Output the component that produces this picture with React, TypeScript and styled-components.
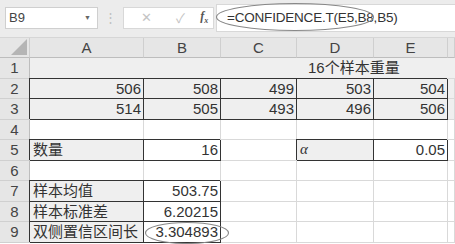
import styled, { createGlobalStyle } from 'styled-components'

const GlobalStyle = createGlobalStyle`
  html, body { margin: 0; padding: 0; background: #ffffff; }
  body { font-family: "Liberation Sans", "Noto Sans CJK SC", sans-serif; color: #333; overflow: hidden; }
`

const COLS = ['A', 'B', 'C', 'D', 'E', '']

type CellDef = { text?: string; align?: 'left' | 'right'; fill?: boolean; boxed?: boolean; italic?: boolean }

const blank: CellDef = {}
const g: CellDef = { fill: true }

// row 1 is a merged title row, drawn separately
const ROWS: CellDef[][] = [
  [
    { text: '506', align: 'right', fill: true, boxed: true },
    { text: '508', align: 'right', fill: true, boxed: true },
    { text: '499', align: 'right', fill: true, boxed: true },
    { text: '503', align: 'right', fill: true, boxed: true },
    { text: '504', align: 'right', fill: true, boxed: true },
    g,
  ],
  [
    { text: '514', align: 'right', fill: true, boxed: true },
    { text: '505', align: 'right', fill: true, boxed: true },
    { text: '493', align: 'right', fill: true, boxed: true },
    { text: '496', align: 'right', fill: true, boxed: true },
    { text: '506', align: 'right', fill: true, boxed: true },
    g,
  ],
  [blank, blank, blank, blank, blank, blank],
  [
    { text: '数量', fill: true, boxed: true },
    { text: '16', align: 'right', boxed: true },
    blank,
    { text: 'α', fill: true, boxed: true, italic: true },
    { text: '0.05', align: 'right', boxed: true },
    blank,
  ],
  [blank, blank, blank, blank, blank, blank],
  [{ text: '样本均值', fill: true, boxed: true }, { text: '503.75', align: 'right', boxed: true }, blank, blank, blank, blank],
  [{ text: '样本标准差', fill: true, boxed: true }, { text: '6.20215', align: 'right', boxed: true }, blank, blank, blank, blank],
  [{ text: '双侧置信区间长', fill: true, boxed: true }, { text: '3.304893', align: 'right', boxed: true }, blank, blank, blank, blank],
]

export default function App() {
  return (
    <Page>
      <GlobalStyle />
      <FormulaBar>
        <NameBox>
          <span>B9</span>
          <Caret>▼</Caret>
        </NameBox>
        <Grip>⋮</Grip>
        <ActionBox>
          <Action>✕</Action>
          <Action>✓</Action>
          <Fx>f<sub>x</sub></Fx>
        </ActionBox>
        <FormulaInput>
          <span>=CONFIDENCE.T(E5,B8,B5)</span>
          <Ring width={160} height={30} style={{ left: -2, top: -3 }}>
            <ellipse cx="80" cy="15" rx="78.5" ry="13.5" />
          </Ring>
        </FormulaInput>
      </FormulaBar>
      <Sheet>
        <Corner>
          <svg width="16" height="16" viewBox="0 0 16 16">
            <polygon points="16,0 16,16 0,16" fill="#b5b5b5" />
          </svg>
        </Corner>
        {COLS.map((c, i) => (
          <ColHead key={'h' + i}>{c}</ColHead>
        ))}
        <RowHead>1</RowHead>
        <TitleCell>16个样本重量</TitleCell>
        {ROWS.map((row, r) => [
          <RowHead key={'r' + r}>{r + 2}</RowHead>,
          ...row.map((cell, c) => (
            <Cell
              key={r + '-' + c}
              $align={cell.align ?? 'left'}
              $fill={!!cell.fill}
              $boxed={!!cell.boxed}
              $italic={!!cell.italic}
            >
              {cell.text}
              {r === 7 && c === 1 && (
                <Ring width={86} height={24} style={{ left: 0, top: -1 }}>
                  <ellipse cx="43" cy="12" rx="41.5" ry="10.5" />
                </Ring>
              )}
            </Cell>
          )),
        ])}
      </Sheet>
    </Page>
  )
}

const Page = styled.div`
  width: 455px;
  height: 244px;
  overflow: hidden;
  background: #fff;
`

const FormulaBar = styled.div`
  height: 38px;
  box-sizing: border-box;
  background: #ececec;
  display: flex;
  align-items: center;
  padding: 0 0 2px 5px;
  border-bottom: 1px solid #d6d6d6;
`

const NameBox = styled.div`
  width: 93px;
  height: 22px;
  box-sizing: border-box;
  background: #fff;
  border: 1px solid #cfcfcf;
  display: flex;
  align-items: center;
  justify-content: space-between;
  padding: 0 6px 0 3px;
  font-size: 13px;
  color: #444;
`

const Caret = styled.span`
  font-size: 7px;
  color: #666;
`

const Grip = styled.div`
  width: 25px;
  text-align: center;
  color: #c0c0c0;
  font-size: 13px;
`

const ActionBox = styled.div`
  width: 91px;
  height: 22px;
  box-sizing: border-box;
  background: #fff;
  border: 1px solid #d8d8d8;
  display: flex;
  align-items: center;
  justify-content: space-around;
  padding: 0 2px 0 6px;
`

const Action = styled.span`
  color: #c4c4c4;
  font-size: 13px;
  width: 28px;
  text-align: center;
`

const Fx = styled.span`
  font-family: "Liberation Serif", serif;
  font-style: italic;
  font-weight: bold;
  font-size: 12px;
  color: #555;
  sub { font-size: 8px; }
`

const FormulaInput = styled.div`
  position: relative;
  flex: 1;
  height: 28px;
  box-sizing: border-box;
  background: #fff;
  border: 1px solid #d8d8d8;
  border-right: none;
  margin-left: 2px;
  display: flex;
  align-items: center;
  padding-left: 10px;
  font-size: 13.5px;
  letter-spacing: -0.2px;
  color: #333;
`

const Ring = styled.svg`
  position: absolute;
  pointer-events: none;
  fill: none;
  stroke: #888;
  stroke-width: 1.1;
`

const Sheet = styled.div`
  display: grid;
  grid-template-columns: 30px 114px 77px 76px 77px 74px 1fr;
  grid-template-rows: 20px repeat(9, 20.5px);
  font-size: 15px;
`

const Corner = styled.div`
  background: #e6e6e6;
  border-right: 1px solid #cfcfcf;
  border-bottom: 1px solid #bdbdbd;
  display: flex;
  align-items: flex-end;
  justify-content: flex-end;
  padding: 0 2px 2px 0;
`

const ColHead = styled.div`
  background: #e6e6e6;
  border-right: 1px solid #cfcfcf;
  border-bottom: 1px solid #bdbdbd;
  display: flex;
  align-items: center;
  justify-content: center;
  color: #444;
  font-size: 15px;
  line-height: 1;
`

const RowHead = styled.div`
  background: #e6e6e6;
  border-right: 1px solid #bdbdbd;
  border-bottom: 1px solid #d0d0d0;
  display: flex;
  align-items: center;
  justify-content: center;
  color: #444;
  font-size: 15px;
`

const TitleCell = styled.div`
  grid-column: 2 / span 6;
  background: #efefef;
  border-bottom: 1px solid #d9d9d9;
  display: flex;
  align-items: center;
  padding-left: 278px;
  white-space: nowrap;
  color: #333;
  line-height: 1;
`

const Cell = styled.div<{ $align: 'left' | 'right'; $fill: boolean; $boxed: boolean; $italic: boolean }>`
  position: relative;
  z-index: ${p => (p.$boxed ? 1 : 0)};
  background: ${p => (p.$fill ? '#efefef' : '#fff')};
  border-right: 1px solid ${p => (p.$boxed ? '#333' : '#d9d9d9')};
  border-bottom: 1px solid ${p => (p.$boxed ? '#333' : '#d9d9d9')};
  box-shadow: ${p => (p.$boxed ? '-1px -1px 0 #333' : 'none')};
  display: flex;
  align-items: center;
  justify-content: ${p => (p.$align === 'right' ? 'flex-end' : 'flex-start')};
  padding: 0 2px 0 3px;
  white-space: nowrap;
  color: #333;
  font-family: ${p => (p.$italic ? '"Liberation Serif", serif' : 'inherit')};
  font-style: ${p => (p.$italic ? 'italic' : 'normal')};
  line-height: 1;
`
